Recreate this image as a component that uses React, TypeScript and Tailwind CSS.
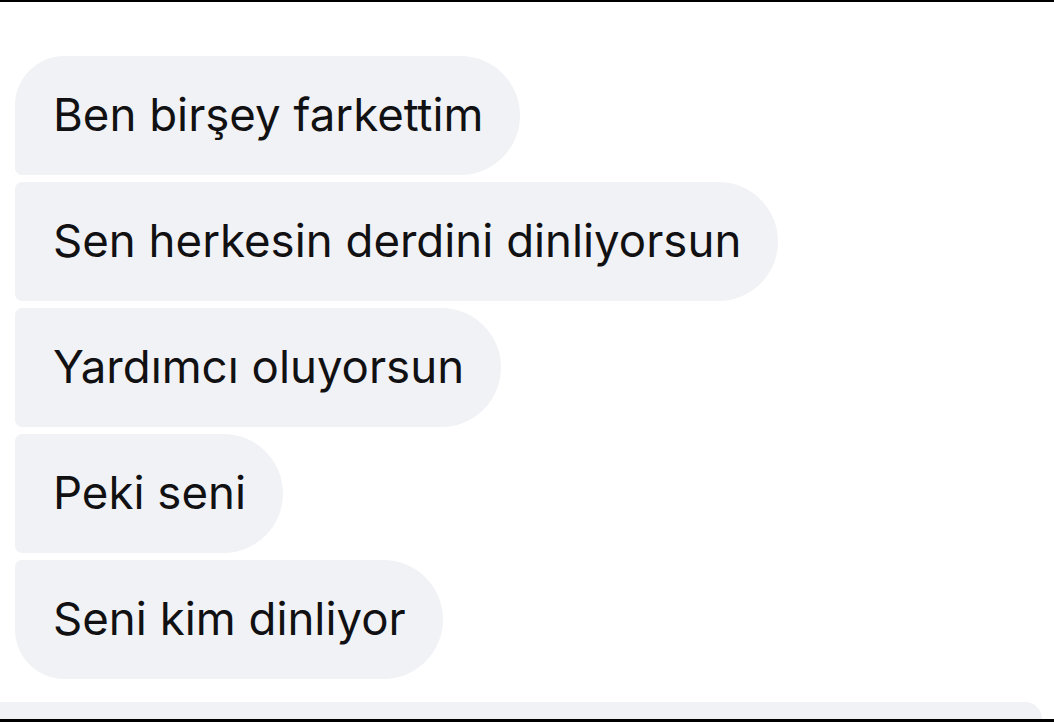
import React from "react";

const msgs = [
  "Ben birşey farkettim",
  "Sen herkesin derdini dinliyorsun",
  "Yardımcı oluyorsun",
  "Peki seni",
  "Seni kim dinliyor",
];

export default function App() {
  return (
    <div
      className="w-[1054px] h-[722px] bg-white overflow-hidden flex flex-col border-t-2 border-b-[3px] border-black"
      style={{ fontFamily: "Inter, 'Noto Sans', sans-serif" }}
    >
      <div className="flex flex-col items-start gap-[7px] pt-[54px] pl-[15px]">
        {msgs.map((m, i) => {
          const first = i === 0;
          const last = i === msgs.length - 1;
          const left = first
            ? "rounded-tl-[50px] rounded-bl-[7px]"
            : last
            ? "rounded-tl-[7px] rounded-bl-[50px]"
            : "rounded-tl-[7px] rounded-bl-[7px]";
          return (
            <div
              key={i}
              className={`h-[119px] flex items-center pl-[38px] pr-[37px] bg-[#f1f2f5] rounded-r-[60px] ${left}`}
            >
              <span className="text-[45.6px] leading-none text-[#111113] pb-[2px]">
                {m}
              </span>
            </div>
          );
        })}
      </div>
      <div className="mt-auto h-[17px] w-[1042px] bg-[#f1f2f5] rounded-tr-[60px]" />
    </div>
  );
}
